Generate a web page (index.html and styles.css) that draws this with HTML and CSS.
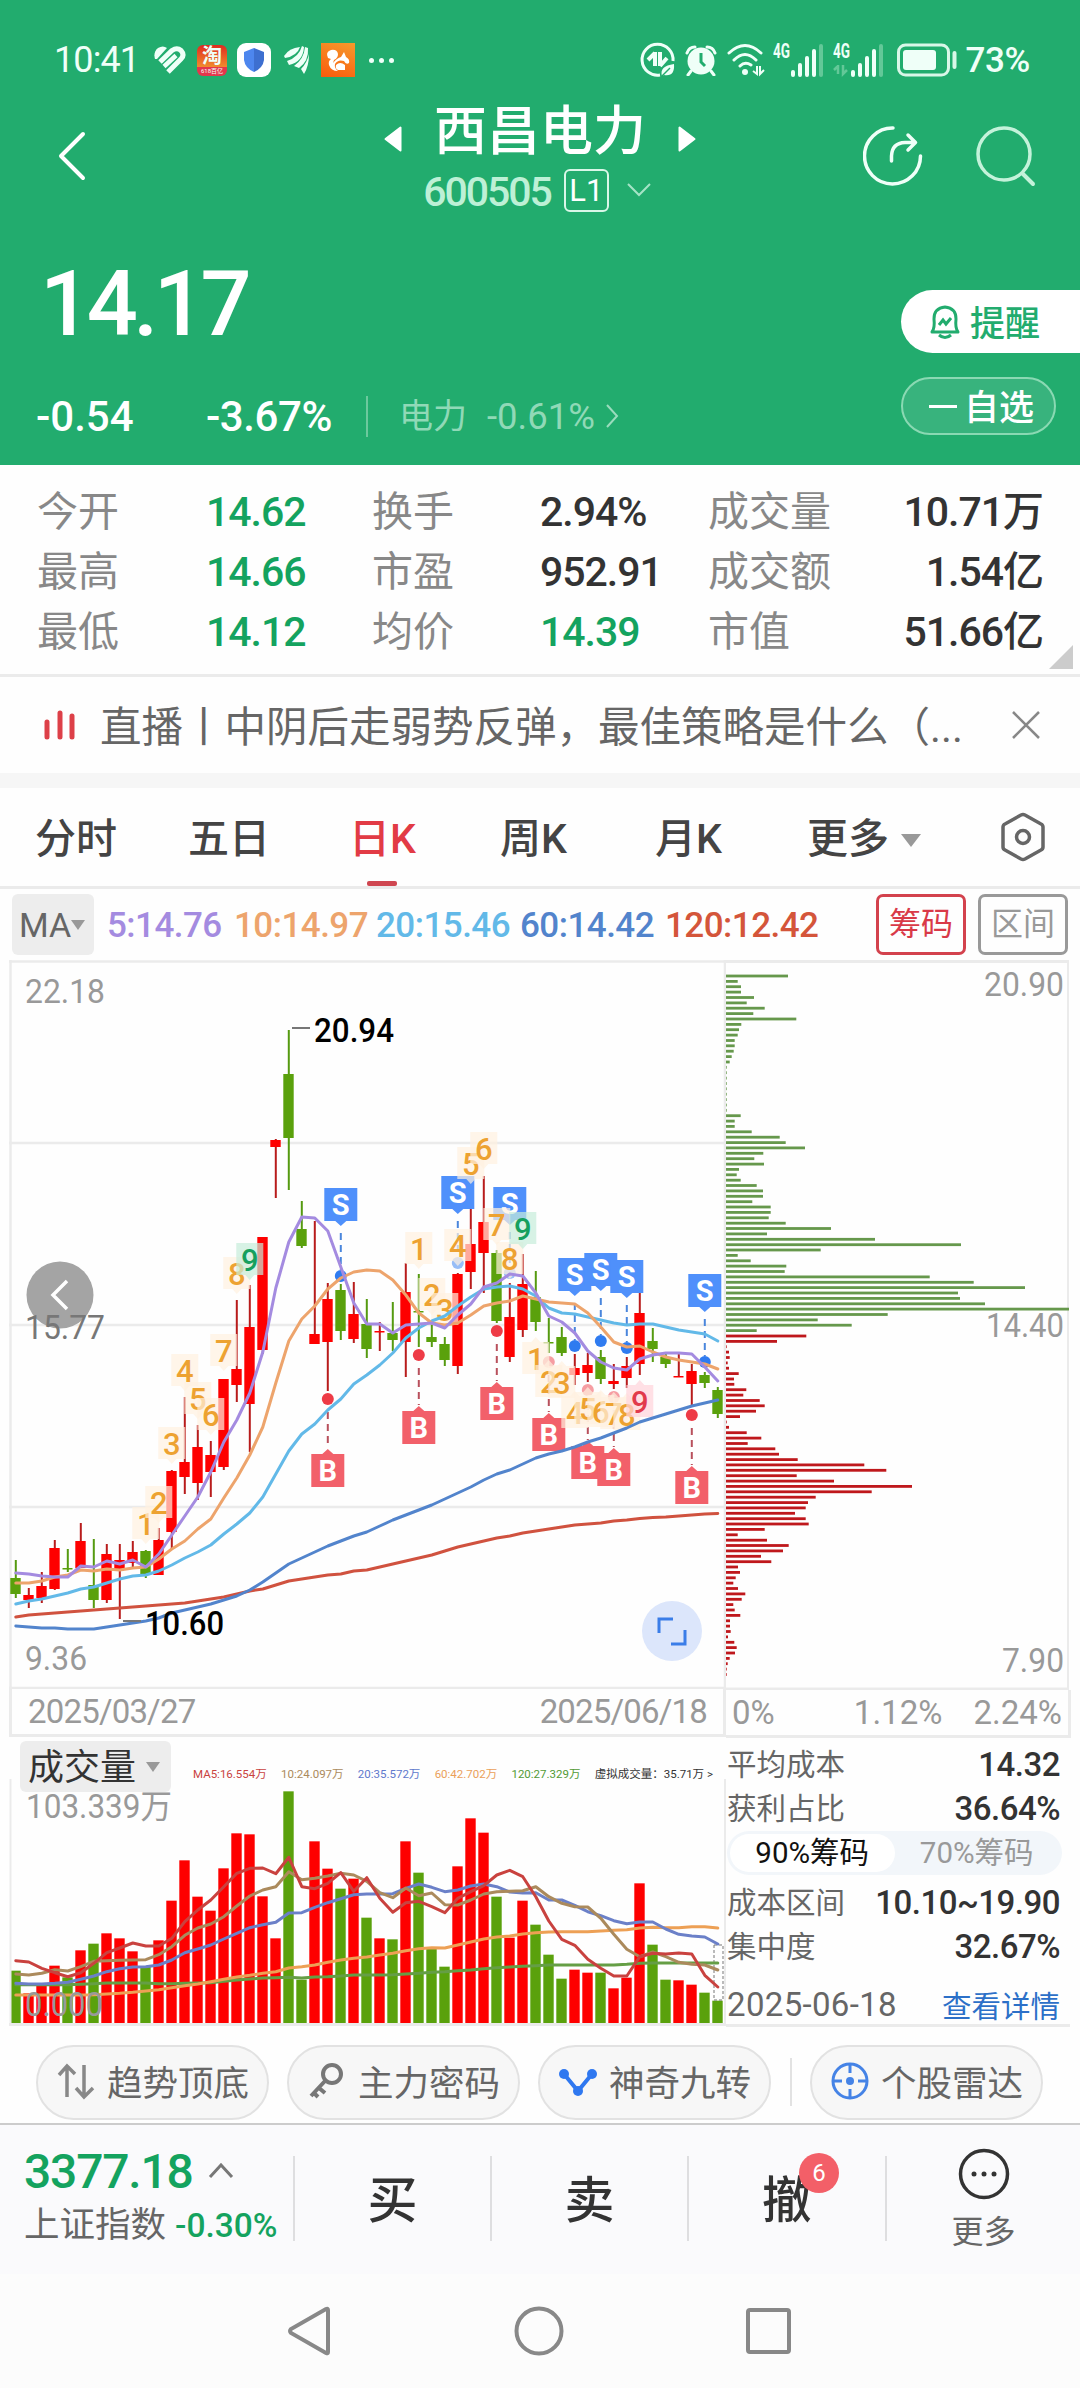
FILE: index.html
```
<!DOCTYPE html>
<html lang="zh-CN">
<head>
    <meta charset="UTF-8">
    <meta name="viewport" content="width=device-width, initial-scale=1.0">
    <title>西昌电力 600505</title>
    <link rel="stylesheet" href="styles.css">
</head>
<body>
    <header class="top">
        <div class="status">
            <span class="clock num">10:41</span>
            <svg class="s-heart" width="32" height="28" viewBox="0 0 32 28">
                <g fill="none" stroke="#effff8">
                    <path d="M1 13Q-1 6 4 2Q9 -1 13 2L3 13Z" fill="#effff8" stroke="none"/>
                    <path d="M6 16L18 4.500Q23 1 27 4.500Q31 9 27 13L14 26" stroke-width="5"/>
                    <path d="M10 20.500L22 9.500" stroke-width="4.500"/>
                </g>
            </svg>
            <span class="app app-tao"><b>淘</b><i>618百亿</i></span>
            <span class="app app-shield">
                <svg width="22" height="24" viewBox="0 0 22 24"><path d="M11 0L21 4V12Q20 20 11 24Z" fill="#3d6fd0"/><path d="M11 0L1 4V12Q2 20 11 24Z" fill="#4d86ee"/></svg>
            </span>
            <svg class="s-feather" width="26" height="28" viewBox="0 0 26 28">
                <g fill="#effff8">
                    <path d="M0 10Q5 2 16 1Q13 10 1 12Z"/>
                    <path d="M3 15Q15 11 18 0L20 1Q19 16 5 19Z"/>
                    <path d="M10 20Q20 13 21 1L24 2Q25 15 15 22Z"/>
                    <path d="M17 23Q23 17 25 8Q25 20 20 28Z"/>
                </g>
            </svg>
            <span class="app app-uc">
                <svg width="34" height="34" viewBox="0 0 34 34"><path d="M7 15Q4 9 10 7Q16 6 17 11Q17 15 13 17L12 20Q16 15 20 14L23 9L25 14Q29 16 28 20Q25 22 23 18Q17 16 14 21Q13 25 17 28Q10 28 8 22Q7 18 10 16Z" fill="#fff"/><path d="M15 22Q19 18 24 22V27H17Q14 26 15 22Z" fill="#fff"/></svg>
            </span>
            <span class="more-dots"><i></i><i></i><i></i></span>
            <div class="status-right">
                <svg class="r-data" width="36" height="36" viewBox="0 0 36 36">
                    <path d="M33 19A15.500 15.500 0 1 0 20 33" fill="none" stroke="#effff8" stroke-width="3"/>
                    <path d="M15 10V24M8 18L15 11M20 10V24M20 24L27 16" fill="none" stroke="#effff8" stroke-width="4"/>
                    <path d="M22 34Q19 24 34 22Q35 35 24 33Z" fill="#effff8"/>
                    <path d="M22 34L30 26" stroke="#22ac6e" stroke-width="1.500"/>
                </svg>
                <svg class="r-alarm" width="32" height="32" viewBox="0 0 32 32">
                    <circle cx="16" cy="17" r="13.500" fill="#effff8"/>
                    <path d="M2 9Q4 3 10 3M30 9Q28 3 22 3M6 27L3 31M26 27L29 31" stroke="#effff8" stroke-width="3" fill="none" stroke-linecap="round"/>
                    <path d="M16 9V18L20 22" fill="none" stroke="#22ac6e" stroke-width="3"/>
                </svg>
                <svg class="r-wifi" width="38" height="34" viewBox="0 0 38 34">
                    <g fill="none" stroke="#effff8" stroke-width="3" stroke-linecap="round"><path d="M2 10Q18 -5 34 10M7 17Q18 6 29 17M13 23Q18 18 24 22"/></g>
                    <circle cx="18" cy="29" r="3" fill="#effff8"/>
                    <path d="M30 23V31L26 28M33 23V31L37 27" fill="none" stroke="#effff8" stroke-width="2"/>
                </svg>
                <svg class="r-sig" width="52" height="42" viewBox="0 -4 52 42">
                    <text x="0" y="15" textLength="17" lengthAdjust="spacingAndGlyphs" class="g4">4G</text>
                    <path d="M20 32V29M27 32V22M34 32V15M41 32V8" stroke="#effff8" stroke-width="4" stroke-linecap="round"/>
                    <path d="M48 32V3" stroke="#63c898" stroke-width="4" stroke-linecap="round"/>
                </svg>
                <svg class="r-sig" width="52" height="42" viewBox="0 -4 52 42">
                    <text x="0" y="15" textLength="17" lengthAdjust="spacingAndGlyphs" class="g4">4G</text>
                    <path d="M5 22V31M1 27L5 23M10 22V31L14 27" fill="none" stroke="#63c898" stroke-width="2.500"/>
                    <path d="M20 32V29M27 32V22M34 32V15M41 32V8" stroke="#effff8" stroke-width="4" stroke-linecap="round"/>
                    <path d="M48 32V3" stroke="#63c898" stroke-width="4" stroke-linecap="round"/>
                </svg>
                <svg class="r-bat" width="60" height="34" viewBox="0 0 60 34">
                    <rect x="1.500" y="2" width="50" height="30" rx="7" fill="none" stroke="#d9f7e8" stroke-width="3"/>
                    <rect x="6" y="7" width="33" height="20" rx="3" fill="#effff8"/>
                    <path d="M57.500 10V24" stroke="#d9f7e8" stroke-width="4" stroke-linecap="round"/>
                </svg>
                <span class="battery">73%</span>
            </div>
        </div>

        <div class="title-bar">
            <svg class="back" width="28" height="50" viewBox="0 0 28 50"><path d="M25 3L3 25L25 47" fill="none" stroke="#fff" stroke-width="4" stroke-linecap="round" stroke-linejoin="round"/></svg>
            <div class="names">
                <div class="name-row">
                    <svg width="18" height="26" viewBox="0 0 18 26"><path d="M16.500 1.500V24.500L1.500 13Z" fill="#fff" stroke="#fff" stroke-width="2" stroke-linejoin="round"/></svg>
                    <h1>西昌电力</h1>
                    <svg width="18" height="26" viewBox="0 0 18 26"><path d="M1.500 1.500V24.500L16.500 13Z" fill="#fff" stroke="#fff" stroke-width="2" stroke-linejoin="round"/></svg>
                </div>
                <div class="code-row">
                    <span class="code num">600505</span>
                    <span class="level">L1</span>
                    <svg width="24" height="14" viewBox="0 0 24 14"><path d="M1 1L12 12L23 1" fill="none" stroke="#a5e4c6" stroke-width="2"/></svg>
                </div>
            </div>
            <div class="tools">
                <svg width="60" height="62" viewBox="0 0 60 62">
                    <path d="M30 3A28 28 0 1 0 57.500 31" fill="none" stroke="#effff8" stroke-width="3.500" stroke-linecap="round"/>
                    <path d="M28.500 36V31Q29 18 42 17.500H51M45 10L52.500 17.500L45 25" fill="none" stroke="#effff8" stroke-width="3.500" stroke-linecap="round" stroke-linejoin="round"/>
                </svg>
                <svg width="60" height="62" viewBox="0 0 60 62">
                    <circle cx="28" cy="29" r="26" fill="none" stroke="#c4f2da" stroke-width="3.500"/>
                    <path d="M47 49L57 59" stroke="#c4f2da" stroke-width="4" stroke-linecap="round"/>
                </svg>
            </div>
        </div>

        <div class="quote">
            <div class="quote-left">
                <div class="price">14.17</div>
                <div class="change">
                    <span class="c1">-0.54</span>
                    <span class="c2">-3.67%</span>
                    <span class="sector">电力</span>
                    <span class="sector-pct">-0.61%</span>
                    <svg width="14" height="24" viewBox="0 0 14 24"><path d="M2 1L12 12L2 23" fill="none" stroke="#9adcbd" stroke-width="2"/></svg>
                </div>
            </div>
            <div class="quote-right">
                <div class="remind">
                    <svg width="34" height="36" viewBox="0 0 34 36">
                        <path d="M4 28Q7 24 6 15Q6 4 17 3Q28 4 28 15Q27 24 30 28Z" fill="none" stroke="#22ac6e" stroke-width="3" stroke-linejoin="round"/>
                        <path d="M11 21L15 16L18 20L23 14M11 31Q17 36 23 31" fill="none" stroke="#22ac6e" stroke-width="3"/>
                    </svg>
                    <span>提醒</span>
                </div>
                <div class="fav"><i></i><span>自选</span></div>
            </div>
        </div>
    </header>

    <section class="stats">
        <span>今开</span><b class="num down">14.62</b><span>换手</span><b class="num">2.94%</b><span>成交量</span><b class="num last">10.71万</b>
        <span>最高</span><b class="num down">14.66</b><span>市盈</span><b class="num">952.91</b><span>成交额</span><b class="num last">1.54亿</b>
        <span>最低</span><b class="num down">14.12</b><span>均价</span><b class="num down">14.39</b><span>市值</span><b class="num last">51.66亿</b>
    </section>

    <section class="news">
        <svg width="32" height="30" viewBox="0 0 32 30"><path d="M3 12V27M16 3V27M28 6V27" stroke="#dd4048" stroke-width="5" stroke-linecap="round"/></svg>
        <p>直播丨中阴后走弱势反弹，最佳策略是什么（...</p>
        <svg width="30" height="30" viewBox="0 0 30 30"><path d="M2 2L28 28M28 2L2 28" stroke="#888" stroke-width="2.500"/></svg>
    </section>

    <nav class="tabs">
        <span>分时</span>
        <span>五日</span>
        <span class="on">日K</span>
        <span>周K</span>
        <span>月K</span>
        <span>更多<i class="tri"></i></span>
        <svg width="44" height="50" viewBox="0 0 44 50">
            <path d="M20 3Q22 2 24 3L40 12Q42 13 42 15V35Q42 37 40 38L24 47Q22 48 20 47L4 38Q2 37 2 35V15Q2 13 4 12Z" fill="none" stroke="#666" stroke-width="3.500"/>
            <circle cx="22" cy="25" r="6.500" fill="none" stroke="#666" stroke-width="3.500"/>
        </svg>
    </nav>

    <section class="ma-row">
        <span class="ma-pick">MA<i class="tri"></i></span>
        <span class="ma m5">5:14.76</span>
        <span class="ma m10">10:14.97</span>
        <span class="ma m20">20:15.46</span>
        <span class="ma m60">60:14.42</span>
        <span class="ma m120">120:12.42</span>
        <span class="btn btn-on">筹码</span>
        <span class="btn">区间</span>
    </section>

    <section class="charts">
        <div class="left">
            <svg id="kline" class="kline" width="717" height="729" viewBox="9 960 717 729"></svg>
            <div class="dates num"><span>2025/03/27</span><span>2025/06/18</span></div>
            <div class="vol">
                <div class="vol-head">
                    <span class="vol-pick">成交量<i class="tri"></i></span>
                    <div class="vol-legend">
                        <span class="v5">MA5:16.554万</span>
                        <span class="v10">10:24.097万</span>
                        <span class="v20">20:35.572万</span>
                        <span class="v60">60:42.702万</span>
                        <span class="v120">120:27.329万</span>
                        <span>虚拟成交量：35.71万 &gt;</span>
                    </div>
                </div>
                <svg id="volume" class="volume" width="717" height="245" viewBox="9 1779 717 245"></svg>
            </div>
        </div>
        <div class="right">
            <svg id="chips" class="chips" width="343" height="730" viewBox="727 960 343 730"></svg>
            <div class="pcts"><span>0%</span><span>1.12%</span><span>2.24%</span></div>
            <div class="info">
                <div class="line"><span>平均成本</span><b>14.32</b></div>
                <div class="line"><span>获利占比</span><b>36.64%</b></div>
                <div class="toggle"><span class="sel">90%筹码</span><span>70%筹码</span></div>
                <div class="line"><span>成本区间</span><b>10.10~19.90</b></div>
                <div class="line"><span>集中度</span><b>32.67%</b></div>
                <div class="line foot"><span class="day">2025-06-18</span><a>查看详情</a></div>
            </div>
        </div>
    </section>

    <section class="pills">
        <span class="pill">
            <svg width="40" height="40" viewBox="0 0 40 40"><g fill="none" stroke="#888" stroke-width="3.500"><path d="M11 36V6M3 14L11 5L19 13"/><path d="M28 4V35M20 27L28 36L37 27"/></g></svg>趋势顶底
        </span>
        <span class="pill">
            <svg width="40" height="40" viewBox="0 0 40 40"><g fill="none" stroke="#777" stroke-width="4"><circle cx="25" cy="13" r="9"/><path d="M18 20L4 35M12 27L18 32M6 31L11 36"/></g></svg>主力密码
        </span>
        <span class="pill">
            <svg width="40" height="40" viewBox="0 0 40 40"><path d="M6 13L20 30L34 13" fill="none" stroke="#2f78f0" stroke-width="4"/><g fill="#2f78f0"><circle cx="6" cy="13" r="5"/><circle cx="20" cy="30" r="5"/><circle cx="34" cy="13" r="5"/></g></svg>神奇九转
        </span>
        <i class="pill-sep"></i>
        <span class="pill">
            <svg width="40" height="40" viewBox="0 0 40 40"><g fill="none" stroke="#4583e6" stroke-width="3"><circle cx="20" cy="20" r="17"/><path d="M20 3V12M20 28V37M3 20H12M28 20H37"/></g><circle cx="20" cy="20" r="4" fill="#4583e6"/></svg>个股雷达
        </span>
    </section>

    <footer class="trade">
        <div class="index">
            <div class="index-top"><span class="num">3377.18</span><svg width="26" height="16" viewBox="0 0 26 16"><path d="M2 14L13 2L24 14" fill="none" stroke="#777" stroke-width="3"/></svg></div>
            <div class="index-sub">上证指数<span>-0.30%</span></div>
        </div>
        <div class="act">买</div>
        <div class="act">卖</div>
        <div class="act">撤<em>6</em></div>
        <div class="act act-more">
            <svg width="52" height="52" viewBox="0 0 52 52"><circle cx="26" cy="26" r="23.500" fill="none" stroke="#333" stroke-width="3.500"/><circle cx="16" cy="26" r="2.500" fill="#333"/><circle cx="26" cy="26" r="2.500" fill="#333"/><circle cx="36" cy="26" r="2.500" fill="#333"/></svg>
            <span>更多</span>
        </div>
    </footer>

    <div class="sysnav">
        <svg width="46" height="52" viewBox="0 0 46 52"><path d="M41 5V47Q41 49 39 48L4 28Q2 26 4 24L39 4Q41 3 41 5Z" fill="none" stroke="#888" stroke-width="4"/></svg>
        <svg width="52" height="52" viewBox="0 0 52 52"><circle cx="26" cy="26" r="22.500" fill="none" stroke="#888" stroke-width="4"/></svg>
        <svg width="48" height="52" viewBox="0 0 48 52"><rect x="3" y="5" width="41" height="42" rx="2" fill="none" stroke="#888" stroke-width="4"/></svg>
    </div>
    <script src="chart.js"></script>
</body>
</html>
```
FILE: styles.css
```
* {
    box-sizing: border-box;
}

body {
    margin: 0;
    width: 1080px;
    background: #fefefe;
    color: #333;
    font-family: Roboto, "Noto Sans CJK SC", sans-serif;
}

svg {
    display: block;
    flex: none;
}

b, i, em {
    font-style: normal;
    font-weight: 400;
}

.num {
    letter-spacing: -0.025em;
}

.down {
    color: #14a35f !important;
}

.tri {
    display: inline-block;
    border: 7px solid transparent;
    border-top: 10px solid #999;
    border-bottom: 0;
}

/* 顶部 */
.top {
    height: 465px;
    background: #22ac6e;
    color: #fff;
}

.status {
    display: flex;
    align-items: center;
    height: 120px;
    padding: 0 50px 0 54px;
    font-size: 36px;
    color: #effff8;
}

.clock {
    width: 100px;
}

.battery {
    font-weight: 500;
    font-size: 35px;
    letter-spacing: -0.01em;
}

.app {
    display: flex;
    justify-content: center;
    align-items: center;
    width: 34px;
    height: 34px;
}

.app-tao {
    flex-direction: column;
    width: 30px;
    height: 31px;
    margin-left: 11px;
    border-radius: 6px;
    background: linear-gradient(#e02a20, #f08a2c 70%, #e4364c 71%);
}

.app-tao b {
    font-size: 20px;
    line-height: 21px;
    font-weight: 700;
}

.app-tao i {
    font-size: 6px;
    line-height: 8px;
    white-space: nowrap;
}

.app-shield {
    margin-left: 10px;
    border-radius: 9px;
    background: #fff;
}

.s-feather {
    margin-left: 13px;
}

.app-uc {
    margin-left: 11px;
    background: linear-gradient(200deg, #f59a2c, #fb5a0c);
}

.more-dots {
    display: flex;
    gap: 5px;
    margin-left: 14px;
}

.more-dots i {
    width: 5px;
    height: 5px;
    border-radius: 50%;
    background: #effff8;
}

.status-right {
    display: flex;
    align-items: center;
    margin-left: auto;
}

.r-alarm {
    margin-left: 9px;
}

.r-wifi {
    margin-left: 10px;
}

.r-sig {
    margin-left: 8px;
}

.r-bat {
    margin: 0 8px 0 12px;
}

.g4 {
    font: 700 20px Roboto, sans-serif;
    fill: #effff8;
}

.title-bar {
    display: grid;
    grid-template-columns: 300px 1fr 300px;
    height: 100px;
    padding: 0 44px 0 58px;
}

.back {
    margin-top: 11px;
}

.names {
    margin-top: -26px;
    margin-left: -14px;
}

.name-row, .code-row {
    display: flex;
    align-items: center;
    justify-content: center;
}

.name-row {
    gap: 32px;
    height: 76px;
}

.name-row svg {
    margin-top: 14px;
}

.name-row h1 {
    margin: 0;
    font-size: 53px;
    font-weight: 500;
    line-height: 76px;
}

.code-row {
    height: 50px;
    margin-top: -5px;
    padding-right: 6px;
}

.code {
    margin-top: 4px;
    font-size: 41px;
    font-weight: 500;
    letter-spacing: -0.05em;
    color: #bdf0d6;
}

.level {
    width: 45px;
    height: 43px;
    margin: 0 18px 0 13px;
    border: 2px solid #d9f7e8;
    border-radius: 6px;
    font-size: 31px;
    line-height: 40px;
    text-align: center;
}

.tools {
    display: flex;
    justify-content: flex-end;
    gap: 53px;
    padding-top: 5px;
}

.quote {
    display: flex;
    justify-content: space-between;
    height: 245px;
}

.price {
    height: 170px;
    padding-left: 40px;
    font-size: 90px;
    line-height: 170px;
    font-weight: 500;
    letter-spacing: -0.05em;
}

.change {
    display: flex;
    align-items: center;
    height: 52px;
    padding-left: 36px;
    font-size: 42px;
    font-weight: 500;
}

.c1 {
    width: 170px;
}

.c2 {
    width: 162px;
    border-right: 2px solid #6cc99d;
    line-height: 41px;
    letter-spacing: -0.01em;
}

.sector {
    margin-left: 31px;
    font-size: 34px;
    line-height: 40px;
    font-weight: 400;
    color: #90d9b7;
}

.sector-pct {
    margin: 0 10px 0 20px;
    font-size: 36.5px;
    font-weight: 400;
    color: #90d9b7;
}

.quote-right {
    width: 179px;
    padding-top: 70px;
    font-size: 35px;
    font-weight: 500;
}

.remind, .fav {
    display: flex;
    align-items: center;
}

.remind span, .fav span {
    margin-top: -3px;
}

.remind {
    height: 63px;
    padding-left: 27px;
    gap: 8px;
    border-radius: 32px 0 0 32px;
    background: #fff;
    color: #22ac6e;
}

.fav {
    width: 155px;
    height: 58px;
    margin-top: 24px;
    padding-left: 26px;
    gap: 7px;
    border: 2px solid #8ad9b3;
    border-radius: 30px;
    background: #38b37d;
}

.fav i {
    width: 28px;
    height: 3px;
    background: #fff;
}

/* 行情数据 */
.stats {
    position: relative;
    display: grid;
    grid-template-columns: 169px 166px 168px 168px 170px 1fr;
    grid-auto-rows: 60px;
    height: 212px;
    padding: 17px 37px 0;
    border-bottom: 3px solid #ebebeb;
    font-size: 41px;
    line-height: 60px;
    color: #888;
}

.stats::after {
    content: "";
    position: absolute;
    right: 7px;
    bottom: 5px;
    border: 12px solid #ccc;
    border-top-color: transparent;
    border-left-color: transparent;
}

.stats b {
    font-weight: 500;
    color: #333;
}

.stats .last {
    text-align: right;
}

.news {
    display: flex;
    align-items: center;
    height: 111px;
    padding-left: 44px;
    border-bottom: 15px solid #f6f6f6;
}

.news p {
    width: 911px;
    margin: -3px 0 0 24px;
    font-size: 41.5px;
    color: #666;
    white-space: nowrap;
}

.tabs {
    display: grid;
    grid-template-columns: 153px 161px 151px 155px 152px 194px 44px;
    align-items: center;
    height: 101px;
    padding-left: 35px;
    border-bottom: 3px solid #ebebeb;
    font-size: 41px;
    font-weight: 500;
    color: #444;
}

.tabs span {
    line-height: 102px;
    height: 98px;
}

.tabs .tri {
    margin: 0 0 6px 12px;
    border-width: 13px 10px 0;
}

.tabs .on {
    position: relative;
    color: #e23b45;
}

.tabs .on::after {
    content: "";
    position: absolute;
    left: 18px;
    bottom: 0;
    width: 30px;
    height: 5px;
    border-radius: 2px;
    background: #cf4650;
}

.ma-row {
    display: flex;
    align-items: center;
    height: 71px;
    padding-left: 12px;
    font-size: 35px;
    white-space: nowrap;
}

.ma-pick {
    display: flex;
    align-items: center;
    width: 82px;
    height: 61px;
    margin-right: 13px;
    padding-left: 7px;
    border-radius: 6px;
    background: #ededed;
    color: #666;
    font-size: 34px;
}

.ma {
    padding-top: 2px;
    font-weight: 500;
    letter-spacing: -0.015em;
}

.m5 { width: 127px; color: #a48be0; }
.m10 { width: 142px; color: #eda46c; }
.m20 { width: 144px; color: #62b9e8; }
.m60 { width: 145px; color: #5284cc; }
.m120 { width: 211px; color: #d4553a; }

.btn {
    width: 90px;
    height: 61px;
    margin-right: 12px;
    border: 3px solid #999;
    border-radius: 7px;
    color: #999;
    font-size: 32px;
    line-height: 55px;
    text-align: center;
}

.btn-on {
    border-color: #d3424d;
    color: #d93a48;
}

/* 图表区 */
.charts {
    display: grid;
    grid-template-columns: 717px 344px;
    height: 1067px;
    padding-left: 9px;
}

.charts .dates, .charts .pcts {
    display: flex;
    justify-content: space-between;
    align-items: center;
    height: 48px;
    border: 3px solid #ebebeb;
    border-top: 0;
    font-size: 33px;
    color: #999;
}

.dates {
    padding: 0 16px 0 16px;
}

.pcts {
    width: 345px;
    padding: 0 6px;
    border-left: 0 !important;
}

.pcts span:nth-child(2) {
    margin-left: 48px;
}

.vol {
    height: 289px;
    border-bottom: 3px solid #ebebeb;
}

.vol-head {
    display: flex;
    height: 42px;
    padding: 4px 0 0 11px;
}

.vol-pick {
    display: flex;
    align-items: center;
    width: 151px;
    height: 51px;
    padding: 0 0 5px 8px;
    border-radius: 6px;
    background: #ededed;
    font-size: 36px;
}

.vol-pick .tri {
    margin: 5px 0 0 10px;
}

.vol-legend {
    display: flex;
    justify-content: space-between;
    width: 520px;
    margin: 23px 0 0 22px;
    font-size: 11.5px;
    line-height: 20px;
    white-space: nowrap;
}

.v5 { color: #c9423f; }
.v10 { color: #ab8a5c; }
.v20 { color: #5f78cc; }
.v60 { color: #eaa05a; }
.v120 { color: #529a35; }

.axis {
    font: 33px Roboto, "Noto Sans CJK SC", sans-serif;
    fill: #999;
}

.axis-mid {
    fill: #777;
}

.axis-dark {
    font-weight: 500;
    fill: #000;
}

.mark {
    font: 700 29px Roboto, sans-serif;
    fill: #fff;
    text-anchor: middle;
}

.nine {
    font: 500 31px Roboto, sans-serif;
    text-anchor: middle;
}

.info {
    height: 289px;
    padding: 2px 10px 0 1px;
    border-bottom: 3px solid #ebebeb;
}

.line {
    display: flex;
    justify-content: space-between;
    align-items: center;
    height: 44px;
    font-size: 29.5px;
    color: #666;
}

.line b {
    margin-top: 4px;
    font-size: 33px;
    font-weight: 500;
    letter-spacing: -0.015em;
    color: #333;
}

.toggle {
    display: flex;
    width: 335px;
    height: 44px;
    margin: 3px 0;
    padding: 3px;
    border-radius: 22px;
    background: #f2f6fa;
    font-size: 29.5px;
    line-height: 38px;
    text-align: center;
    color: #999;
}

.toggle span {
    width: 50%;
}

.toggle .sel {
    border-radius: 20px;
    background: #fff;
    color: #111;
}

.foot {
    margin-top: 16px;
}

.foot .day {
    font-size: 33px;
    letter-spacing: 0.01em;
}

.foot a {
    color: #2c70c8;
}

/* 功能按钮 */
.pills {
    display: flex;
    height: 98px;
    padding: 18px 0 0 36px;
    border-bottom: 2px solid #ccc;
}

.pill {
    display: flex;
    align-items: center;
    gap: 11px;
    width: 233px;
    height: 75px;
    margin-right: 18px;
    padding: 0 0 4px 18px;
    border: 2px solid #e2e2e2;
    border-radius: 38px;
    background: #f7f7f7;
    font-size: 35.5px;
    color: #666;
    white-space: nowrap;
}

.pill-sep {
    width: 2px;
    height: 48px;
    margin: 13px 18px 0 1px;
    background: #e2e2e2;
}

.trade {
    display: grid;
    grid-template-columns: 293px 197px 197px 198px 195px;
    height: 149px;
    padding-top: 31px;
    background: #fafafc;
}

.index {
    padding-left: 24px;
    white-space: nowrap;
}

.index-top {
    display: flex;
    align-items: center;
    gap: 15px;
    height: 30px;
    font-size: 48px;
    font-weight: 500;
    letter-spacing: -0.02em;
    color: #14a35f;
}

.index-sub {
    height: 50px;
    margin-top: 14px;
    font-size: 35.5px;
    line-height: 50px;
    color: #666;
}

.index-sub span {
    margin-left: 9px;
    font-size: 33.5px;
    font-weight: 500;
    color: #14a35f;
}

.act {
    position: relative;
    display: flex;
    justify-content: center;
    align-items: center;
    height: 85px;
    padding-bottom: 6px;
    border-left: 2px solid #dedee0;
    font-size: 50px;
    font-weight: 500;
}

.act em {
    position: absolute;
    left: 110px;
    top: -3px;
    width: 40px;
    height: 40px;
    border-radius: 50%;
    background: #f35f68;
    color: #fff;
    font-size: 24px;
    font-weight: 400;
    line-height: 40px;
    text-align: center;
}

.act-more {
    flex-direction: column;
    padding-bottom: 0;
    font-size: 32px;
    font-weight: 400;
    color: #666;
}

.act-more span {
    margin: 8px 0 -6px;
    line-height: 48px;
}

.sysnav {
    display: flex;
    justify-content: center;
    gap: 180px;
    height: 114px;
    padding-top: 31px;
    background: #fcfcfc;
}
```
FILE: chart.js
```
const RED = '#fe0000', GREEN = '#5aa10c';
const svg = id => document.getElementById(id);
const X = i => 15.8 + 13 * i;
const line = (ys, color, fn = y => y) =>
    `<polyline points="${ys.map((y, i) => X(i).toFixed(1) + ',' + fn(y).toFixed(1)).join(' ')}" fill="none" stroke="${color}" stroke-width="3" stroke-linejoin="round" stroke-linecap="round"/>`;
const label = (x, y, w, t, cls = '') =>
    `<text class="axis ${cls}" x="${x}" y="${y}" textLength="${w}" lengthAdjust="spacingAndGlyphs">${t}</text>`;

// 颜色, 最高, 最低, 实体上沿, 实体下沿
const candles = [
    ['g',1560,1598,1578,1594],['r',1588,1608,1595,1600],['r',1572,1603,1586,1598],['r',1540,1590,1548,1589],['g',1549,1572,1568,1569],
    ['r',1523,1568,1541,1568],['g',1539,1608,1585,1600],['r',1544,1603,1554,1600],['r',1544,1619,1560,1570],['r',1541,1567,1552,1563],
    ['g',1550,1578,1551,1574],['r',1528,1575,1540,1575],['r',1470,1549,1471,1532],['r',1397,1494,1462,1477],['r',1425,1500,1447,1483],
    ['r',1441,1497,1455,1472],['r',1379,1470,1379,1467],['r',1300,1402,1369,1385],['r',1285,1452,1327,1404],['r',1237,1354,1237,1350],
    ['r',1139,1198,1140,1147],['g',1030,1190,1074,1138],['g',1201,1248,1229,1246],['r',1221,1344,1334,1344],['r',1283,1391,1299,1342],
    ['g',1284,1340,1290,1331],['r',1282,1343,1314,1339],['g',1299,1358,1324,1349],['r',1322,1351,1331,1332],['g',1302,1351,1333,1340],
    ['r',1263,1377,1292,1342],['g',1274,1347,1311,1312],['g',1324,1347,1337,1342],['g',1337,1366,1344,1360],['r',1273,1374,1274,1366],
    ['r',1189,1289,1244,1272],['r',1176,1293,1222,1253],['g',1250,1323,1253,1321],['r',1283,1362,1317,1357],['r',1254,1337,1284,1330],
    ['g',1271,1331,1297,1322],['g',1318,1353,1342,1343],['g',1327,1356,1337,1353],['r',1354,1385,1368,1375],['r',1353,1382,1365,1373],
    ['g',1350,1384,1357,1379],['r',1364,1389,1381,1384],['r',1357,1388,1366,1378],['r',1284,1375,1313,1364],['g',1328,1362,1341,1349],
    ['g',1352,1368,1357,1364],['r',1353,1377,1376,1377],['r',1364,1405,1371,1384],['g',1372,1388,1375,1383],['g',1387,1418,1390,1414]
];

const ma5 = [1573,1574,1576,1577,1577,1566,1567,1561,1564,1560,1567,1554,1535,1516,1497,1472,1442,1420,1393,1352,1288,1242,1217,1218,1231,1267,1303,1324,1324,1333,1325,1324,1323,1328,1315,1304,1287,1283,1274,1276,1293,1316,1322,1333,1351,1362,1368,1370,1359,1355,1353,1353,1354,1367,1381];
const ma10 = [1583,1583,1581,1577,1575,1570,1571,1569,1570,1568,1567,1559,1549,1541,1529,1519,1498,1478,1455,1427,1383,1341,1319,1306,1289,1278,1272,1270,1271,1280,1295,1313,1323,1325,1323,1315,1306,1303,1301,1296,1299,1302,1303,1304,1313,1327,1342,1347,1346,1352,1357,1360,1362,1364,1369];
const ma20 = [1604,1601,1599,1596,1593,1589,1587,1583,1579,1576,1575,1571,1565,1558,1552,1545,1534,1524,1513,1497,1474,1451,1434,1424,1410,1399,1384,1375,1365,1353,1338,1328,1321,1316,1306,1297,1289,1287,1286,1289,1296,1308,1313,1314,1317,1320,1323,1325,1324,1324,1327,1330,1332,1334,1341];
const ma60 = [1626,1627,1628,1628,1629,1629,1629,1627,1625,1623,1621,1618,1613,1610,1607,1604,1600,1596,1590,1582,1573,1564,1558,1552,1546,1541,1536,1532,1526,1520,1515,1510,1505,1499,1493,1487,1480,1474,1470,1464,1458,1454,1451,1447,1442,1438,1433,1428,1422,1418,1414,1410,1406,1403,1400];
const ma120 = [1617,1615,1614,1613,1612,1611,1610,1609,1608,1607,1606,1605,1604,1603,1601,1599,1597,1594,1591,1589,1585,1581,1579,1577,1575,1574,1571,1570,1567,1564,1561,1558,1555,1551,1547,1544,1541,1538,1536,1533,1531,1529,1527,1525,1524,1523,1521,1520,1518.500,1517.500,1517,1516,1515,1514,1513.500];

// 买卖点: 序号, 方块顶部, 圆点位置, 圆点是否被遮盖
const sells = [[25,1188,1276],[34,1176,1263,1],[38,1187,1273,1],[43,1258,1346],[45,1253,1341],[47,1260,1348],[53,1274,1362]];
const buys = [[24,1454,1399],[31,1411,1355],[37,1387,1331],[41,1418,1362,1],[44,1446,1390,1],[46,1453,1397,1],[52,1471,1415]];

// 九转: 序号, 数字, 方块顶部
const ninesUp = [[10,1,1507],[11,2,1486],[12,3,1427],[13,4,1354],[14,5,1382],[15,6,1398],[16,7,1334],[17,8,1257],[18,9,1243],
    [31,1,1232],[32,2,1278],[33,3,1293],[34,4,1229],[35,5,1147],[36,6,1132],[37,7,1208],[38,8,1242],[39,9,1212]];
const ninesDown = [[40,1,1342],[41,2,1365],[42,3,1366],[43,4,1396],[44,5,1392],[45,6,1395],[46,7,1397],[47,8,1398],[48,9,1385]];

function drawCandle([c, hi, lo, top, bot], i) {
    const col = c === 'r' ? RED : GREEN;
    const x = X(i);
    const w = bot - top <= 1 ? 10 : 10.400;
    return `<path d="M${x} ${hi}V${lo}" stroke="${c === 'r' ? '#b81c1c' : '#559a10'}" stroke-width="2"/>` +
        `<rect x="${x - w / 2 - 0.300}" y="${top}" width="${w}" height="${Math.max(bot - top, 1.500)}" fill="${col}"/>`;
}

function drawSell([i, top, dot, hid]) {
    const x = X(i);
    return `<path d="M${x} ${top + 45}V${dot - 6}" stroke="#4a86dc" stroke-width="2" stroke-dasharray="7 5"/>` +
        `<circle cx="${x}" cy="${dot}" r="6" fill="#2f7bf0" opacity="${hid ? .5 : 1}"/>` +
        `<path d="M${x - 16.500} ${top}h33v33h-11l-5.500 5l-5.500 -5h-11z" fill="#4f90fb"/>` +
        `<text class="mark" x="${x}" y="${top + 27}">S</text>`;
}

function drawBuy([i, top, dot, hid]) {
    const x = X(i);
    return `<path d="M${x} ${dot + 13}V${top - 6}" stroke="#b8505c" stroke-width="2" stroke-dasharray="7 5"/>` +
        `<circle cx="${x}" cy="${dot}" r="6" fill="#ee3b46" opacity="${hid ? .5 : 1}"/>` +
        `<path d="M${x - 16.500} ${top}h11l5.500 -5l5.500 5h11v33h-33z" fill="#f2606a"/>` +
        `<text class="mark" x="${x}" y="${top + 27}">B</text>`;
}

function drawNine([i, n, top], up) {
    const x = X(i);
    let bg = '#fff1e0', fg = '#eda231';
    if (n === 9) {
        bg = up ? '#c6ecda' : '#ffd3da';
        fg = up ? '#16a05e' : '#e23a4c';
    }
    const d = up ? `M${x - 13.500} ${top}h27v32h-9l-4.500 5l-4.500 -5h-9z` : `M${x - 13.500} ${top}h9l4.500 -5l4.500 5h9v32h-27z`;
    return `<path d="${d}" fill="${bg}" opacity=".7"/><text class="nine" x="${x}" y="${top + 28}" fill="${fg}">${n}</text>`;
}

svg('kline').innerHTML =
    `<path d="M9 961.500H726M10.500 960V1689M725 960V1689M9 1143H726M9 1325H726M9 1507H726M9 1688H726" fill="none" stroke="#ebebeb" stroke-width="2.500"/>` +
    `<circle cx="60" cy="1295" r="33.500" fill="#a4a4a4"/><path d="M67 1281L53 1295L67 1309" fill="none" stroke="#fff" stroke-width="3.500"/>` +
    label(25, 1003, 80, '22.18') + label(25, 1339, 80, '15.77', 'axis-mid') + label(25, 1670, 62, '9.36') +
    candles.map(drawCandle).join('') +
    sells.map(drawSell).join('') + buys.map(drawBuy).join('') +
    ninesUp.map(n => drawNine(n, true)).join('') + ninesDown.map(n => drawNine(n, false)).join('') +
    line(ma120, '#d0523f') + line(ma60, '#5284cc') + line(ma20, '#62b9e8') + line(ma10, '#eda46c') + line(ma5, '#a48be0') +
    `<path d="M292 1028H310M123 1621H141" stroke="#777" stroke-width="2"/>` +
    label(314, 1042, 80, '20.94', 'axis-dark') + label(145, 1635, 79, '10.60', 'axis-dark') +
    `<circle cx="672" cy="1631" r="30" fill="#dce6fb"/><path d="M659 1633V1619H673M671 1644H685V1630" fill="none" stroke="#3a7de8" stroke-width="3"/>`;

// 成交量, 三分之一像素为单位, 自 1720 起
const vols = [752,820,797,737,772,691,671,640,655,694,738,661,542,421,530,572,445,340,343,529,655,214,779,364,446,506,476,593,655,658,364,458,683,740,439,295,338,530,653,542,614,704,776,749,758,758,805,773,490,674,779,781,794,818,842];
const v5 = [722,726,745,758,770,758,730,698,684,669,678,678,655,605,570,540,500,460,445,444,461,412,500,506,490,458,514,473,535,577,548,544,560,578,535,515,497,465,451,470,530,603,658,676,718,745,768,768,710,700,702,699,702,766,801];
const v10 = [762,765,760,749,753,740,724,722,721,720,719,704,680,646,624,612,590,558,528,510,500,455,479,475,468,460,465,484,518,533,504,527,519,554,555,540,522,515,514,512,500,530,550,560,561,595,643,688,710,696,710,727,733,735,750];
const v20 = [790,792,792,790,787,778,768,755,746,741,740,735,720,698,687,675,657,640,623,614,607,579,578,562,548,536,524,522,522,521,505,492,502,515,510,498,492,500,516,519,518,540,540,556,575,587,602,611,606,606,627,643,648,651,672];
const v60 = [825,825,825,825,825,825,824,822,820,817,813,809,803,797,792,785,778,771,766,760,755,744,740,735,727,720,715,711,705,700,692,686,683,684,675,666,657,651,648,642,638,636,635,635,635,633,631,629,624,622,623,623,620,620,624];
const v120 = [794,794,794,794,794,793,791,789,789,789,789,791,791,790,789,788,784,780,777,774,773,772,774,771,770,768,765,765,765,764,762,760,757,755,752,750,746,743,741,739,737,735,735,735,735,735,735,733,730,729,729,729,729,729,729];
const VY = v => 1720 + v / 3;

svg('volume').innerHTML =
    vols.map((v, i) => `<rect x="${X(i) - 5.500}" y="${VY(v)}" width="10.400" height="${2023 - VY(v)}" fill="${candles[i][0] === 'r' ? RED : GREEN}"/>`).join('') +
    `<rect x="714" y="1945" width="9" height="55" fill="none" stroke="#777" stroke-width="1" stroke-dasharray="3 2"/>` +
    line(v120, '#659e45', VY) + line(v60, '#eda055', VY) + line(v20, '#6b80c8', VY) + line(v10, '#ab8a5c', VY) + line(v5, '#c9423f', VY) +
    `<path d="M10.500 1779V2024M725 1779V2024" stroke="#ebebeb" stroke-width="2"/>` +
    label(26, 1818, 146, '103.339万') + label(25, 2016, 78, '0.000');

// 筹码分布: 每一档右端, 前 67 档为套牢
const chips = [267,116,126,126,165,143,197,163,292,127,120,116,107,107,104,98,92,83,83,83,83,83,83,83,83,83,125,107,107,158,242,260,318,193,166,195,120,113,125,173,192,192,160,215,215,209,260,396,204,528,786,365,116,155,262,257,692,824,978,777,783,858,1110,566,356,458,173,
    322,234,83,90,92,86,90,119,105,106,142,133,182,197,171,123,83,90,143,187,146,229,240,296,496,562,293,405,639,518,350,327,320,288,320,329,197,116,204,269,252,186,217,117,123,110,103,117,139,128,103,107,124,93,93,95,87,106,113,108,92,86,83,83];

svg('chips').innerHTML =
    `<path d="M727 961.500H1070M1069.500 960V1690M727 1689H1070" fill="none" stroke="#ebebeb" stroke-width="3"/>` +
    chips.map((v, k) => `<rect x="726" y="${(974.600 + k * 5.373).toFixed(1)}" width="${((v - 78) / 3).toFixed(1)}" height="2.800" fill="${k < 67 ? '#66984c' : '#bf181c'}"/>`).join('') +
    label(985, 996, 80, '20.90') + label(987, 1337, 78, '14.40') + label(1003, 1672, 62, '7.90');
```
